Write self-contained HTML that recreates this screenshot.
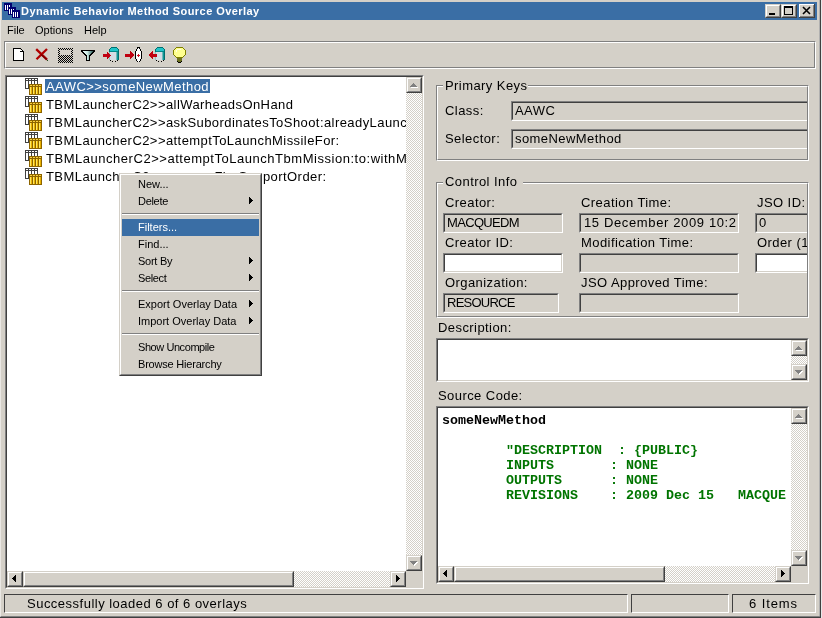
<!DOCTYPE html>
<html><head><meta charset="utf-8">
<style>
*{margin:0;padding:0;box-sizing:border-box}
html,body{width:822px;height:618px;overflow:hidden;background:#D4D0C8;will-change:transform;font-family:"Liberation Sans",sans-serif;color:#000}
.a{position:absolute}
.t{position:absolute;white-space:pre;font-size:13px;line-height:16px;letter-spacing:.43px}
.m{position:absolute;white-space:pre;font-size:11px;line-height:13px}
.sunk{position:absolute;border-top:1px solid #808080;border-left:1px solid #808080;border-right:1px solid #fff;border-bottom:1px solid #fff}
.sunk>.in{position:absolute;left:0;top:0;right:0;bottom:0;border-top:1px solid #404040;border-left:1px solid #404040;border-right:1px solid #D4D0C8;border-bottom:1px solid #D4D0C8}
.etch{position:absolute;border-top:1px solid #808080;border-left:1px solid #808080;border-right:1px solid #fff;border-bottom:1px solid #fff}
.etch>.in{position:absolute;left:0;top:0;right:0;bottom:0;border-top:1px solid #fff;border-left:1px solid #fff;border-right:1px solid #808080;border-bottom:1px solid #808080}
.btn{position:absolute;width:16px;height:16px;background:#D4D0C8;border-top:1px solid #D4D0C8;border-left:1px solid #D4D0C8;border-right:1px solid #404040;border-bottom:1px solid #404040}
.btn>.in{position:absolute;left:0;top:0;right:0;bottom:0;border-top:1px solid #fff;border-left:1px solid #fff;border-right:1px solid #808080;border-bottom:1px solid #808080}
.dith{position:absolute;background:repeating-conic-gradient(#D4D0C8 0 25%,#fff 0 50%) 0 0/2px 2px}
svg{position:absolute;shape-rendering:crispEdges}
</style></head><body>

<!-- window frame -->
<div class="a" style="left:819px;top:0;width:1px;height:618px;background:#B0B0B0"></div>
<div class="a" style="left:820px;top:0;width:1px;height:618px;background:#404040"></div>
<div class="a" style="left:821px;top:0;width:1px;height:618px;background:#e8e8e8"></div>
<div class="a" style="left:0;top:616px;width:820px;height:1px;background:#808080"></div>
<div class="a" style="left:0;top:617px;width:821px;height:1px;background:#404040"></div>
<div class="a" style="left:0;top:0;width:1px;height:617px;background:#fff;opacity:.5"></div>

<!-- title bar -->
<div class="a" style="left:2px;top:2px;width:815px;height:18px;background:#3A6EA5"></div>
<svg style="left:4px;top:2px" width="17" height="17"><rect x="0" y="1" width="8" height="8" fill="#000070"/><path d="M1 3h1v5h-1zM3 3h1v5h-1zM5 3h1v5h-1z" fill="#fff"/><rect x="4" y="5" width="8" height="8" fill="#000070"/><path d="M5 7h1v5h-1zM7 7h1v5h-1zM9 7h1v5h-1z" fill="#fff"/><rect x="8" y="8" width="8" height="8" fill="#000070"/><path d="M9 10h1v5h-1zM11 10h1v5h-1zM13 10h1v5h-1z" fill="#fff"/></svg>
<div class="a" style="left:21px;top:4px;white-space:pre;font-size:11px;line-height:14px;font-weight:bold;color:#fff;letter-spacing:.44px">Dynamic Behavior Method Source Overlay</div>
<!-- caption buttons -->
<div class="btn" style="left:765px;top:4px;height:14px"><div class="in"></div>
  <div class="a" style="left:3px;top:8px;width:6px;height:2px;background:#000"></div></div>
<div class="btn" style="left:781px;top:4px;height:14px"><div class="in"></div>
  <div class="a" style="left:2px;top:1px;width:9px;height:9px;border:1px solid #000;border-top-width:2px"></div></div>
<svg style="left:799px;top:4px;shape-rendering:auto" width="16" height="14"><rect x="0" y="0" width="16" height="14" fill="#D4D0C8"/><path d="M0 0H15V1H1V13H0Z" fill="#fff"/><path d="M15 0H16V14H0V13H15Z" fill="#404040"/><path d="M14 1H15V13H1V12H14Z" fill="#808080"/>
  <path d="M4 3L11 10M11 3L4 10" stroke="#000" stroke-width="1.6"/></svg>

<!-- menu bar -->
<div class="m" style="left:7px;top:24px">File</div>
<div class="m" style="left:35px;top:24px">Options</div>
<div class="m" style="left:84px;top:24px">Help</div>

<!-- toolbar -->
<div class="etch" style="left:4px;top:41px;width:812px;height:28px"><div class="in"></div></div>
<svg style="left:0;top:0" width="200" height="70" viewBox="0 0 200 70">
<!-- new -->
<path d="M14 49H20V50H21V51H22V52H23V60H14Z" fill="#fff"/>
<path d="M13 48H20V49H14V60H23V52H24V61H13Z" fill="#000"/>
<path d="M20 48H21V49H22V50H23V51H24V52H20V48ZM21 51H22V50H21V49H20V51H23Z" fill="#000"/>
<path d="M21 50H22V51H21Z" fill="#fff"/>
<!-- red X -->
<g style="shape-rendering:auto">
<path d="M36.2 49.2L47 59.6M47 49L36.5 59.2" stroke="#B00000" stroke-width="2.3" stroke-linecap="butt"/>
<path d="M41 54.5L47 59.6" stroke="#700000" stroke-width="1.2"/>
</g>
<rect x="47" y="60" width="1" height="1" fill="#205020"/>
<!-- save disabled -->
<path d="M58 48h1v1h-1zM60 48h1v1h-1zM62 48h1v1h-1zM64 48h1v1h-1zM66 48h1v1h-1zM68 48h1v1h-1zM70 48h1v1h-1zM72 48h1v1h-1zM59 49h1v1h-1zM61 49h1v1h-1zM63 49h1v1h-1zM65 49h1v1h-1zM67 49h1v1h-1zM69 49h1v1h-1zM71 49h1v1h-1zM58 50h1v1h-1zM72 50h1v1h-1zM59 51h1v1h-1zM71 51h1v1h-1zM58 52h1v1h-1zM72 52h1v1h-1zM59 53h1v1h-1zM71 53h1v1h-1zM58 54h1v1h-1zM72 54h1v1h-1zM59 55h1v1h-1zM61 55h1v1h-1zM63 55h1v1h-1zM65 55h1v1h-1zM67 55h1v1h-1zM69 55h1v1h-1zM71 55h1v1h-1zM58 56h1v1h-1zM60 56h1v1h-1zM62 56h1v1h-1zM64 56h1v1h-1zM66 56h1v1h-1zM68 56h1v1h-1zM70 56h1v1h-1zM72 56h1v1h-1zM59 57h1v1h-1zM61 57h1v1h-1zM63 57h1v1h-1zM65 57h1v1h-1zM67 57h1v1h-1zM69 57h1v1h-1zM71 57h1v1h-1zM58 58h1v1h-1zM60 58h1v1h-1zM62 58h1v1h-1zM64 58h1v1h-1zM66 58h1v1h-1zM68 58h1v1h-1zM70 58h1v1h-1zM72 58h1v1h-1zM59 59h1v1h-1zM61 59h1v1h-1zM63 59h1v1h-1zM65 59h1v1h-1zM67 59h1v1h-1zM69 59h1v1h-1zM71 59h1v1h-1zM58 60h1v1h-1zM60 60h1v1h-1zM62 60h1v1h-1zM64 60h1v1h-1zM66 60h1v1h-1zM68 60h1v1h-1zM70 60h1v1h-1zM72 60h1v1h-1zM59 61h1v1h-1zM61 61h1v1h-1zM63 61h1v1h-1zM65 61h1v1h-1zM67 61h1v1h-1zM69 61h1v1h-1zM71 61h1v1h-1zM58 62h1v1h-1zM60 62h1v1h-1zM62 62h1v1h-1zM64 62h1v1h-1zM66 62h1v1h-1zM68 62h1v1h-1zM70 62h1v1h-1zM72 62h1v1h-1z" fill="#000"/>
<!-- funnel -->
<defs><linearGradient id="fg" x1="0" x2="1" y1="0" y2="0"><stop offset="0" stop-color="#F0FFFF"/><stop offset=".45" stop-color="#C8E8E0"/><stop offset="1" stop-color="#285858"/></linearGradient></defs>
<path d="M83 51h10v1h-10zM84 52h8v1h-8zM85 53h6v1h-6zM86 54h4v1h-4zM87 55h2v1h-2zM87 56h2v1h-2zM87 57h2v1h-2zM87 58h2v1h-2zM87 59h2v1h-2z" fill="url(#fg)"/>
<path d="M81 50h14v1h-14zM81 51h2v1h-2zM93 51h2v1h-2zM82 52h2v1h-2zM92 52h2v1h-2zM83 53h2v1h-2zM91 53h2v1h-2zM84 54h2v1h-2zM90 54h2v1h-2zM85 55h2v1h-2zM89 55h2v1h-2zM86 56h1v1h-1zM89 56h1v1h-1zM86 57h1v1h-1zM89 57h1v1h-1zM86 58h1v1h-1zM89 58h1v1h-1zM86 59h1v1h-1zM89 59h1v1h-1zM86 60h4v1h-4z" fill="#000"/>
<!-- arrow -> cylinder -->
<rect x="111" y="47" width="6" height="1" fill="#007070"/><rect x="110" y="48" width="1" height="1" fill="#007070"/><rect x="111" y="48" width="6" height="1" fill="#20C4C8"/><rect x="117" y="48" width="1" height="1" fill="#007070"/><rect x="109" y="49" width="1" height="2" fill="#007070"/><rect x="110" y="49" width="8" height="2" fill="#20C4C8"/><rect x="118" y="49" width="1" height="2" fill="#007070"/><rect x="109" y="51" width="1" height="1" fill="#007070"/><rect x="110" y="51" width="8" height="1" fill="#008888"/><rect x="118" y="51" width="1" height="1" fill="#007070"/><rect x="109" y="52" width="1" height="8" fill="#90C0C0"/><rect x="110" y="52" width="6" height="8" fill="#D4DCE4"/><rect x="116" y="52" width="1" height="8" fill="#70B8B8"/><rect x="117" y="52" width="1" height="8" fill="#109898"/><rect x="118" y="52" width="1" height="8" fill="#007070"/><rect x="110" y="60" width="1" height="1" fill="#000"/><rect x="112" y="61" width="1" height="1" fill="#000"/><rect x="115" y="61" width="1" height="1" fill="#000"/><rect x="117" y="60" width="1" height="1" fill="#000"/>
<path d="M103 54H107V52H108V53H109V54H110V55H111V56H110V57H109V58H108V59H107V57H103Z" fill="#C00010"/>
<!-- arrow -> lens -->
<path d="M125 54H130V51H131V52H132V53H133V54H134V56H133V57H132V58H131V59H130V57H125Z" fill="#C00010"/>
<path d="M137 47H140V49H141V51H142V59H141V61H140V62H137V61H136V59H135V51H136V49H137Z" fill="#000"/>
<path d="M138 48H139V49H140V51H141V59H140V61H139V62H138V61H137V59H136V51H137V49H138Z" fill="#fff"/>
<path d="M138 54H139V55H140V56H139V57H138V56H137V55H138Z" fill="#D01020"/>
<!-- left arrow + cylinder -->
<rect x="157" y="47" width="6" height="1" fill="#007070"/><rect x="156" y="48" width="1" height="1" fill="#007070"/><rect x="157" y="48" width="6" height="1" fill="#20C4C8"/><rect x="163" y="48" width="1" height="1" fill="#007070"/><rect x="155" y="49" width="1" height="2" fill="#007070"/><rect x="156" y="49" width="8" height="2" fill="#20C4C8"/><rect x="164" y="49" width="1" height="2" fill="#007070"/><rect x="155" y="51" width="1" height="1" fill="#007070"/><rect x="156" y="51" width="8" height="1" fill="#008888"/><rect x="164" y="51" width="1" height="1" fill="#007070"/><rect x="155" y="52" width="1" height="8" fill="#90C0C0"/><rect x="156" y="52" width="6" height="8" fill="#D4DCE4"/><rect x="162" y="52" width="1" height="8" fill="#70B8B8"/><rect x="163" y="52" width="1" height="8" fill="#109898"/><rect x="164" y="52" width="1" height="8" fill="#007070"/><rect x="156" y="60" width="1" height="1" fill="#000"/><rect x="158" y="61" width="1" height="1" fill="#000"/><rect x="161" y="61" width="1" height="1" fill="#000"/><rect x="163" y="60" width="1" height="1" fill="#000"/>
<path d="M157 54H153V51H152V52H151V53H150V54H149V56H150V57H151V58H152V59H153V57H157Z" fill="#C00010"/>
<!-- bulb -->
<path d="M176 47H183V48H184V49H185V50H186V55H185V56H184V57H183V58H176V57H175V56H174V55H173V50H174V49H175V48H176Z" fill="#808000"/>
<path d="M176 48H183V49H184V50H185V55H184V56H183V57H176V56H175V55H174V50H175V49H176Z" fill="#FFFF90"/>
<path d="M177 49H181V50H177ZM176 50H177V52H176Z" fill="#FFFFE0"/>
<path d="M177 58H182V61H181V62H178V61H177Z" fill="#6C7020"/>
<path d="M177 61H178V62H181V61H182V62H181V63H178V62H177Z" fill="#000"/>
</svg>

<!-- tree panel -->
<div class="sunk" style="left:5px;top:75px;width:419px;height:514px;background:#fff"><div class="in"></div></div>
<!--TREE-->
<div class="a" style="left:7px;top:77px;width:399px;height:494px;overflow:hidden">
<div class="a" style="left:38px;top:2px;width:165px;height:14px;background:#3A6EA5"></div>
<svg style="left:18px;top:1px" width="17" height="17" viewBox="0 0 17 17"><path d="M0 0H13V11H0Z" fill="#fff"/><path d="M0 0H13V1H0ZM0 0H1V11H0ZM0 10H13V11H0ZM12 0H13V11H12ZM0 2H13V3H0ZM3 0H4V11H3ZM6 0H7V11H6ZM9 0H10V11H9Z" fill="#404040"/><path d="M4 6H17V17H4Z" fill="#E8B000"/><path d="M5 9H6V16H5ZM8 9H9V16H8ZM11 9H12V16H11ZM14 9H15V16H14Z" fill="#FFE860"/><path d="M5 7H16V8H5Z" fill="#F8D040"/><path d="M4 6H17V7H4ZM4 6H5V17H4ZM4 16H17V17H4ZM16 6H17V17H16ZM4 8H17V9H4ZM7 6H8V17H7ZM10 6H11V17H10ZM13 6H14V17H13Z" fill="#8C6400"/></svg>
<div class="t" style="left:39px;top:2px;color:#fff;">AAWC&gt;&gt;someNewMethod</div>
<svg style="left:18px;top:19px" width="17" height="17" viewBox="0 0 17 17"><path d="M0 0H13V11H0Z" fill="#fff"/><path d="M0 0H13V1H0ZM0 0H1V11H0ZM0 10H13V11H0ZM12 0H13V11H12ZM0 2H13V3H0ZM3 0H4V11H3ZM6 0H7V11H6ZM9 0H10V11H9Z" fill="#404040"/><path d="M4 6H17V17H4Z" fill="#E8B000"/><path d="M5 9H6V16H5ZM8 9H9V16H8ZM11 9H12V16H11ZM14 9H15V16H14Z" fill="#FFE860"/><path d="M5 7H16V8H5Z" fill="#F8D040"/><path d="M4 6H17V7H4ZM4 6H5V17H4ZM4 16H17V17H4ZM16 6H17V17H16ZM4 8H17V9H4ZM7 6H8V17H7ZM10 6H11V17H10ZM13 6H14V17H13Z" fill="#8C6400"/></svg>
<div class="t" style="left:39px;top:20px;color:#000;">TBMLauncherC2&gt;&gt;allWarheadsOnHand</div>
<svg style="left:18px;top:37px" width="17" height="17" viewBox="0 0 17 17"><path d="M0 0H13V11H0Z" fill="#fff"/><path d="M0 0H13V1H0ZM0 0H1V11H0ZM0 10H13V11H0ZM12 0H13V11H12ZM0 2H13V3H0ZM3 0H4V11H3ZM6 0H7V11H6ZM9 0H10V11H9Z" fill="#404040"/><path d="M4 6H17V17H4Z" fill="#E8B000"/><path d="M5 9H6V16H5ZM8 9H9V16H8ZM11 9H12V16H11ZM14 9H15V16H14Z" fill="#FFE860"/><path d="M5 7H16V8H5Z" fill="#F8D040"/><path d="M4 6H17V7H4ZM4 6H5V17H4ZM4 16H17V17H4ZM16 6H17V17H16ZM4 8H17V9H4ZM7 6H8V17H7ZM10 6H11V17H10ZM13 6H14V17H13Z" fill="#8C6400"/></svg>
<div class="t" style="left:39px;top:38px;color:#000;">TBMLauncherC2&gt;&gt;askSubordinatesToShoot:alreadyLaunched:</div>
<svg style="left:18px;top:55px" width="17" height="17" viewBox="0 0 17 17"><path d="M0 0H13V11H0Z" fill="#fff"/><path d="M0 0H13V1H0ZM0 0H1V11H0ZM0 10H13V11H0ZM12 0H13V11H12ZM0 2H13V3H0ZM3 0H4V11H3ZM6 0H7V11H6ZM9 0H10V11H9Z" fill="#404040"/><path d="M4 6H17V17H4Z" fill="#E8B000"/><path d="M5 9H6V16H5ZM8 9H9V16H8ZM11 9H12V16H11ZM14 9H15V16H14Z" fill="#FFE860"/><path d="M5 7H16V8H5Z" fill="#F8D040"/><path d="M4 6H17V7H4ZM4 6H5V17H4ZM4 16H17V17H4ZM16 6H17V17H16ZM4 8H17V9H4ZM7 6H8V17H7ZM10 6H11V17H10ZM13 6H14V17H13Z" fill="#8C6400"/></svg>
<div class="t" style="left:39px;top:56px;color:#000;">TBMLauncherC2&gt;&gt;attemptToLaunchMissileFor:</div>
<svg style="left:18px;top:73px" width="17" height="17" viewBox="0 0 17 17"><path d="M0 0H13V11H0Z" fill="#fff"/><path d="M0 0H13V1H0ZM0 0H1V11H0ZM0 10H13V11H0ZM12 0H13V11H12ZM0 2H13V3H0ZM3 0H4V11H3ZM6 0H7V11H6ZM9 0H10V11H9Z" fill="#404040"/><path d="M4 6H17V17H4Z" fill="#E8B000"/><path d="M5 9H6V16H5ZM8 9H9V16H8ZM11 9H12V16H11ZM14 9H15V16H14Z" fill="#FFE860"/><path d="M5 7H16V8H5Z" fill="#F8D040"/><path d="M4 6H17V7H4ZM4 6H5V17H4ZM4 16H17V17H4ZM16 6H17V17H16ZM4 8H17V9H4ZM7 6H8V17H7ZM10 6H11V17H10ZM13 6H14V17H13Z" fill="#8C6400"/></svg>
<div class="t" style="left:39px;top:74px;color:#000;letter-spacing:.53px">TBMLauncherC2&gt;&gt;attemptToLaunchTbmMission:to:withMissile:</div>
<svg style="left:18px;top:91px" width="17" height="17" viewBox="0 0 17 17"><path d="M0 0H13V11H0Z" fill="#fff"/><path d="M0 0H13V1H0ZM0 0H1V11H0ZM0 10H13V11H0ZM12 0H13V11H12ZM0 2H13V3H0ZM3 0H4V11H3ZM6 0H7V11H6ZM9 0H10V11H9Z" fill="#404040"/><path d="M4 6H17V17H4Z" fill="#E8B000"/><path d="M5 9H6V16H5ZM8 9H9V16H8ZM11 9H12V16H11ZM14 9H15V16H14Z" fill="#FFE860"/><path d="M5 7H16V8H5Z" fill="#F8D040"/><path d="M4 6H17V7H4ZM4 6H5V17H4ZM4 16H17V17H4ZM16 6H17V17H16ZM4 8H17V9H4ZM7 6H8V17H7ZM10 6H11V17H10ZM13 6H14V17H13Z" fill="#8C6400"/></svg>
<div class="t" style="left:39px;top:92px;color:#000;">TBMLauncherC2&gt;&gt;processFireSupportOrder:</div>
</div>
<div class="dith" style="left:406px;top:93px;width:16px;height:462px"></div>
<div class="btn" style="left:406px;top:77px"><div class="in"></div><svg style="left:-1px;top:-1px" width="16" height="16"><path d="M8 7h1v1h-1zM7 8h3v1h-3zM6 9h5v1h-5zM5 10h7v1h-7z" fill="#fff"/><path d="M7 6h1v1h-1zM6 7h3v1h-3zM5 8h5v1h-5zM4 9h7v1h-7z" fill="#808080"/></svg></div>
<div class="btn" style="left:406px;top:555px"><div class="in"></div><svg style="left:-1px;top:-1px" width="16" height="16"><path d="M5 7h7v1h-7zM6 8h5v1h-5zM7 9h3v1h-3zM8 10h1v1h-1z" fill="#fff"/><path d="M4 6h7v1h-7zM5 7h5v1h-5zM6 8h3v1h-3zM7 9h1v1h-1z" fill="#808080"/></svg></div>
<div class="dith" style="left:23px;top:571px;width:367px;height:16px"></div>
<div class="btn" style="left:7px;top:571px"><div class="in"></div><svg style="left:-1px;top:-1px" width="16" height="16"><path d="M5 7h1v1h-1zM6 6h1v3h-1zM7 5h1v5h-1zM8 4h1v7h-1z" fill="#000"/></svg></div>
<div class="btn" style="left:23px;top:571px;width:271px"><div class="in"></div></div>
<div class="btn" style="left:390px;top:571px"><div class="in"></div><svg style="left:-1px;top:-1px" width="16" height="16"><path d="M6 4h1v7h-1zM7 5h1v5h-1zM8 6h1v3h-1zM9 7h1v1h-1z" fill="#000"/></svg></div>
<div class="a" style="left:406px;top:571px;width:16px;height:16px;background:#D4D0C8"></div>
<!--/TREE-->

<!--MENU-->
<div class="a" style="left:119px;top:173px;width:143px;height:203px;background:#D4D0C8;border-top:1px solid #D4D0C8;border-left:1px solid #D4D0C8;border-right:1px solid #404040;border-bottom:1px solid #404040">
<div class="a" style="left:0;top:0;right:0;bottom:0;border-top:1px solid #fff;border-left:1px solid #fff;border-right:1px solid #808080;border-bottom:1px solid #808080"></div>
<div class="m" style="left:18px;top:4px;color:#000;letter-spacing:0px">New...</div>
<div class="m" style="left:18px;top:21px;color:#000;letter-spacing:-0.3px">Delete</div>
<svg style="left:129px;top:23px" width="4" height="7"><path d="M0 0H1V1H2V2H3V3H4V4H3V5H2V6H1V7H0Z" fill="#000"/></svg>
<div class="a" style="left:2px;top:39px;width:137px;height:1px;background:#808080"></div><div class="a" style="left:2px;top:40px;width:137px;height:1px;background:#fff"></div>
<div class="a" style="left:2px;top:45px;width:137px;height:17px;background:#3A6EA5"></div>
<div class="m" style="left:18px;top:47px;color:#fff;letter-spacing:0px">Filters...</div>
<div class="m" style="left:18px;top:64px;color:#000;letter-spacing:0px">Find...</div>
<div class="m" style="left:18px;top:81px;color:#000;letter-spacing:-0.25px">Sort By</div>
<svg style="left:129px;top:83px" width="4" height="7"><path d="M0 0H1V1H2V2H3V3H4V4H3V5H2V6H1V7H0Z" fill="#000"/></svg>
<div class="m" style="left:18px;top:98px;color:#000;letter-spacing:-0.35px">Select</div>
<svg style="left:129px;top:100px" width="4" height="7"><path d="M0 0H1V1H2V2H3V3H4V4H3V5H2V6H1V7H0Z" fill="#000"/></svg>
<div class="a" style="left:2px;top:116px;width:137px;height:1px;background:#808080"></div><div class="a" style="left:2px;top:117px;width:137px;height:1px;background:#fff"></div>
<div class="m" style="left:18px;top:124px;color:#000;letter-spacing:0px">Export Overlay Data</div>
<svg style="left:129px;top:126px" width="4" height="7"><path d="M0 0H1V1H2V2H3V3H4V4H3V5H2V6H1V7H0Z" fill="#000"/></svg>
<div class="m" style="left:18px;top:141px;color:#000;letter-spacing:0px">Import Overlay Data</div>
<svg style="left:129px;top:143px" width="4" height="7"><path d="M0 0H1V1H2V2H3V3H4V4H3V5H2V6H1V7H0Z" fill="#000"/></svg>
<div class="a" style="left:2px;top:159px;width:137px;height:1px;background:#808080"></div><div class="a" style="left:2px;top:160px;width:137px;height:1px;background:#fff"></div>
<div class="m" style="left:18px;top:167px;color:#000;letter-spacing:-0.43px">Show Uncompile</div>
<div class="m" style="left:18px;top:184px;color:#000;letter-spacing:-0.2px">Browse Hierarchy</div>
</div><!--/MENU-->
<!-- right panels -->
<div class="etch" style="left:436px;top:85px;width:373px;height:76px"><div class="in"></div></div>
<div class="a" style="left:443px;top:80px;width:85px;height:12px;background:#D4D0C8"></div>
<div class="t" style="left:445px;top:78px">Primary Keys</div>
<div class="t" style="left:445px;top:103px">Class:</div>
<div class="t" style="left:445px;top:131px">Selector:</div>
<div class="a" style="left:438px;top:87px;width:369px;height:72px;overflow:hidden">
<div class="sunk" style="left:73px;top:14px;width:320px;height:20px;background:#D4D0C8;overflow:hidden"><div class="in"></div><div class="a" style="left:2px;top:2px;right:2px;bottom:2px;overflow:hidden"><div class="t" style="left:1px;top:-1px">AAWC</div></div></div>
<div class="sunk" style="left:73px;top:42px;width:320px;height:20px;background:#D4D0C8;overflow:hidden"><div class="in"></div><div class="a" style="left:2px;top:2px;right:2px;bottom:2px;overflow:hidden"><div class="t" style="left:1px;top:-1px">someNewMethod</div></div></div>
</div>
<div class="etch" style="left:436px;top:182px;width:373px;height:136px"><div class="in"></div></div>
<div class="a" style="left:443px;top:176px;width:80px;height:12px;background:#D4D0C8"></div>
<div class="t" style="left:445px;top:174px">Control Info</div>
<div class="t" style="left:445px;top:195px">Creator:</div>
<div class="t" style="left:445px;top:235px">Creator ID:</div>
<div class="t" style="left:445px;top:275px">Organization:</div>
<div class="t" style="left:581px;top:195px">Creation Time:</div>
<div class="t" style="left:581px;top:235px">Modification Time:</div>
<div class="t" style="left:581px;top:275px">JSO Approved Time:</div>
<div class="a" style="left:438px;top:184px;width:369px;height:132px;overflow:hidden">
<div class="t" style="left:319px;top:11px">JSO ID:</div>
<div class="t" style="left:319px;top:51px">Order (1-n):</div>
<div class="sunk" style="left:5px;top:29px;width:120px;height:20px;background:#D4D0C8;overflow:hidden"><div class="in"></div><div class="a" style="left:2px;top:2px;right:2px;bottom:2px;overflow:hidden"><div class="t" style="left:1px;top:-1px;letter-spacing:-0.66px">MACQUEDM</div></div></div>
<div class="sunk" style="left:5px;top:69px;width:120px;height:20px;background:#fff;overflow:hidden"><div class="in"></div></div>
<div class="sunk" style="left:5px;top:109px;width:116px;height:20px;background:#D4D0C8;overflow:hidden"><div class="in"></div><div class="a" style="left:2px;top:2px;right:2px;bottom:2px;overflow:hidden"><div class="t" style="left:1px;top:-1px;letter-spacing:-0.75px">RESOURCE</div></div></div>
<div class="sunk" style="left:141px;top:29px;width:160px;height:20px;background:#D4D0C8;overflow:hidden"><div class="in"></div><div class="a" style="left:2px;top:2px;right:2px;bottom:2px;overflow:hidden"><div class="t" style="left:2px;top:-1px;letter-spacing:.63px">15 December 2009 10:29:33</div></div></div>
<div class="sunk" style="left:141px;top:69px;width:160px;height:20px;background:#D4D0C8;overflow:hidden"><div class="in"></div></div>
<div class="sunk" style="left:141px;top:109px;width:160px;height:20px;background:#D4D0C8;overflow:hidden"><div class="in"></div></div>
<div class="sunk" style="left:317px;top:29px;width:80px;height:20px;background:#D4D0C8;overflow:hidden"><div class="in"></div><div class="a" style="left:2px;top:2px;right:2px;bottom:2px;overflow:hidden"><div class="t" style="left:1px;top:-1px">0</div></div></div>
<div class="sunk" style="left:317px;top:69px;width:80px;height:20px;background:#fff;overflow:hidden"><div class="in"></div></div>
</div>
<div class="t" style="left:438px;top:320px">Description:</div>
<div class="sunk" style="left:436px;top:338px;width:373px;height:44px;background:#fff"><div class="in"></div></div>
<div class="dith" style="left:791px;top:356px;width:16px;height:8px"></div>
<div class="btn" style="left:791px;top:340px"><div class="in"></div><svg style="left:-1px;top:-1px" width="16" height="16"><path d="M8 7h1v1h-1zM7 8h3v1h-3zM6 9h5v1h-5zM5 10h7v1h-7z" fill="#fff"/><path d="M7 6h1v1h-1zM6 7h3v1h-3zM5 8h5v1h-5zM4 9h7v1h-7z" fill="#808080"/></svg></div>
<div class="btn" style="left:791px;top:364px"><div class="in"></div><svg style="left:-1px;top:-1px" width="16" height="16"><path d="M5 7h7v1h-7zM6 8h5v1h-5zM7 9h3v1h-3zM8 10h1v1h-1z" fill="#fff"/><path d="M4 6h7v1h-7zM5 7h5v1h-5zM6 8h3v1h-3zM7 9h1v1h-1z" fill="#808080"/></svg></div>
<div class="t" style="left:438px;top:388px">Source Code:</div>
<div class="sunk" style="left:436px;top:406px;width:373px;height:178px;background:#fff"><div class="in"></div></div>
<div class="a" style="left:438px;top:408px;width:353px;height:158px;overflow:hidden">
<div class="a" style="left:4px;top:5px;white-space:pre;font-family:'Liberation Mono',monospace;font-weight:bold;font-size:13.33px;line-height:15px;color:#007400"><b style="color:#000">someNewMethod</b>

        "DESCRIPTION  : {PUBLIC}
        INPUTS       : NONE
        OUTPUTS      : NONE
        REVISIONS    : 2009 Dec 15   MACQUE</div>
</div>
<div class="dith" style="left:791px;top:424px;width:16px;height:126px"></div>
<div class="btn" style="left:791px;top:408px"><div class="in"></div><svg style="left:-1px;top:-1px" width="16" height="16"><path d="M8 7h1v1h-1zM7 8h3v1h-3zM6 9h5v1h-5zM5 10h7v1h-7z" fill="#fff"/><path d="M7 6h1v1h-1zM6 7h3v1h-3zM5 8h5v1h-5zM4 9h7v1h-7z" fill="#808080"/></svg></div>
<div class="btn" style="left:791px;top:550px"><div class="in"></div><svg style="left:-1px;top:-1px" width="16" height="16"><path d="M5 7h7v1h-7zM6 8h5v1h-5zM7 9h3v1h-3zM8 10h1v1h-1z" fill="#fff"/><path d="M4 6h7v1h-7zM5 7h5v1h-5zM6 8h3v1h-3zM7 9h1v1h-1z" fill="#808080"/></svg></div>
<div class="dith" style="left:454px;top:566px;width:321px;height:16px"></div>
<div class="btn" style="left:438px;top:566px"><div class="in"></div><svg style="left:-1px;top:-1px" width="16" height="16"><path d="M5 7h1v1h-1zM6 6h1v3h-1zM7 5h1v5h-1zM8 4h1v7h-1z" fill="#000"/></svg></div>
<div class="btn" style="left:454px;top:566px;width:211px"><div class="in"></div></div>
<div class="btn" style="left:775px;top:566px"><div class="in"></div><svg style="left:-1px;top:-1px" width="16" height="16"><path d="M6 4h1v7h-1zM7 5h1v5h-1zM8 6h1v3h-1zM9 7h1v1h-1z" fill="#000"/></svg></div>
<div class="a" style="left:791px;top:566px;width:16px;height:16px;background:#D4D0C8"></div>
<!-- /right panels -->

<!-- status bar -->
<div class="a" style="left:4px;top:594px;width:624px;height:19px;border-top:1px solid #404040;border-left:1px solid #404040;border-right:1px solid #fff;border-bottom:1px solid #fff"></div>
<div class="a" style="left:631px;top:594px;width:98px;height:19px;border-top:1px solid #404040;border-left:1px solid #404040;border-right:1px solid #fff;border-bottom:1px solid #fff"></div>
<div class="a" style="left:732px;top:594px;width:84px;height:19px;border-top:1px solid #404040;border-left:1px solid #404040;border-right:1px solid #fff;border-bottom:1px solid #fff"></div>
<div class="t" style="left:27px;top:596px;letter-spacing:.49px">Successfully loaded 6 of 6 overlays</div>
<div class="t" style="left:749px;top:596px;letter-spacing:.9px">6 Items</div>
</body></html>
